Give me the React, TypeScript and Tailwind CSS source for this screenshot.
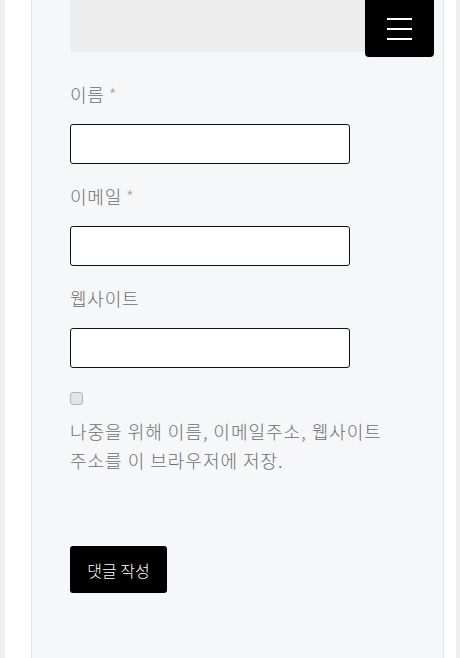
import React from "react";

const font = { fontFamily: '"Noto Sans CJK KR", "Noto Sans", sans-serif' };

function Field({ label, required }: { label: string; required?: boolean }) {
  return (
    <div className="flex flex-col">
      <label className="h-[29px] text-[18px] font-light leading-[29px] tracking-[0.8px] text-[#6e6e6e]">
        {label}
        {required && <span className="ml-[4px] text-[#c79b6c]">*</span>}
      </label>
      <input
        type="text"
        className="mt-[15px] h-[40px] w-[280px] rounded-[3px] border border-[#111] bg-white outline-none"
      />
    </div>
  );
}

export default function App() {
  return (
    <div className="flex h-[658px] w-[460px] overflow-hidden bg-[#efefef]" style={font}>
      <div className="ml-[5px] flex h-full w-[451px] bg-white pl-[26px]">
        {/* comment form panel */}
        <div className="relative h-full w-[413px] border-x border-[#e6e6e6] bg-[#f6f7f9] pl-[38px]">
          <div className="h-[52px] w-[335px] rounded-bl-[4px] bg-[#ededed]" />

          {/* menu toggle */}
          <button className="absolute left-[333px] top-0 flex h-[57px] w-[69px] flex-col items-center justify-center gap-[8px] rounded-b-[4px] bg-black">
            <span className="h-[2px] w-[25px] bg-white" />
            <span className="h-[2px] w-[25px] bg-white" />
            <span className="h-[2px] w-[25px] bg-white" />
          </button>

          <div className="mt-[28px] flex flex-col gap-[18px]">
            <Field label="이름" required />
            <Field label="이메일" required />
            <Field label="웹사이트" />
          </div>

          <div className="mt-[24px] flex flex-col">
            <input
              type="checkbox"
              className="h-[13px] w-[13px] appearance-none rounded-[3px] border border-[#b5b5b5] bg-[#e4e4e4]"
            />
            <p className="mt-[12px] w-[330px] break-keep text-[18px] font-light leading-[29px] tracking-[1px] text-[#6e6e6e]">
              나중을 위해 이름, 이메일주소, 웹사이트 주소를 이 브라우저에 저장.
            </p>
          </div>

          <button className="mt-[71px] h-[47px] w-[97px] rounded-[3px] bg-black text-[16px] font-light text-white">
            댓글 작성
          </button>
        </div>
      </div>
    </div>
  );
}
